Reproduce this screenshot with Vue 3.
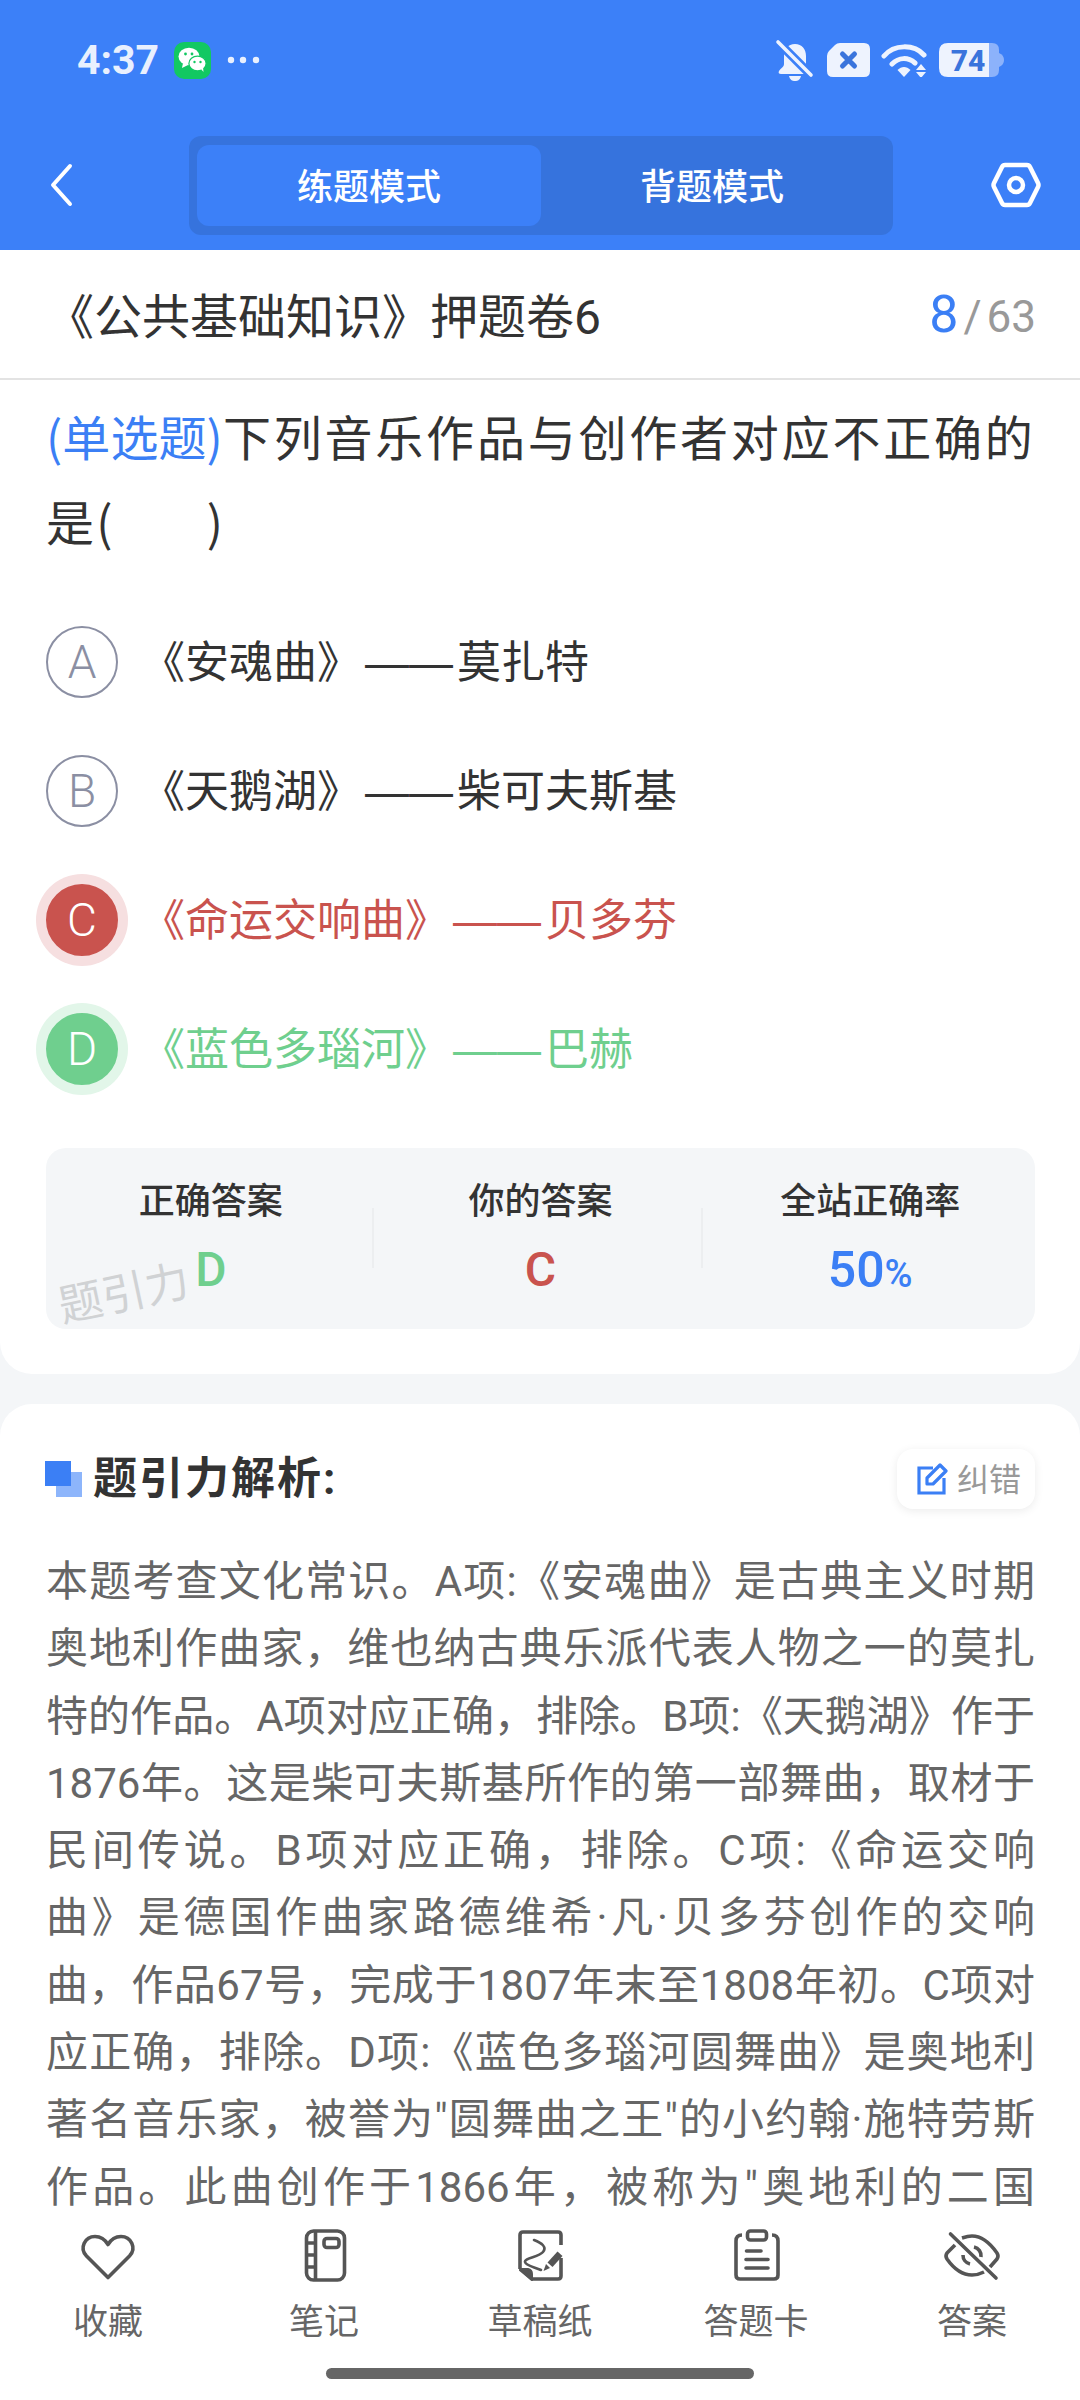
<template>
  <div class="screen">
    <header class="top">
      <div class="status">
        <div class="status-left">
          <span class="time">4:37</span>
          <svg class="wechat" width="37" height="37" viewBox="0 0 37 37">
            <rect width="37" height="37" rx="10" fill="#12c862" />
            <ellipse cx="15" cy="14.5" rx="10.5" ry="8.8" fill="#fff" />
            <path d="M9 21l-1 5 6-3z" fill="#fff" />
            <ellipse cx="23.5" cy="21.5" rx="8.6" ry="7.4" fill="#fff" stroke="#12c862" stroke-width="1.2" />
            <path d="M27 27l2.5 3-.5-5z" fill="#fff" />
            <circle cx="11.5" cy="12" r="1.4" fill="#12c862" />
            <circle cx="18" cy="12" r="1.4" fill="#12c862" />
            <circle cx="20.5" cy="20" r="1.2" fill="#12c862" />
            <circle cx="26.5" cy="20" r="1.2" fill="#12c862" />
          </svg>
          <svg width="36" height="8" viewBox="0 0 36 8">
            <circle cx="4" cy="4" r="3.2" fill="#e9f0fe" />
            <circle cx="16" cy="4" r="3.2" fill="#e9f0fe" />
            <circle cx="29" cy="4" r="3.2" fill="#e9f0fe" />
          </svg>
        </div>
        <div class="status-right">
          <svg width="42" height="42" viewBox="0 0 42 42">
            <path d="M21 5c-7 0-11 5-11 12v8c0 3-3 4-5 7-1 2 0 3 2 3h28c2 0 3-1 2-3-2-3-5-4-5-7v-8c0-7-4-12-11-12z" fill="#eef3fe" />
            <path d="M15 37h12c-1 4-3 5-6 5s-5-1-6-5z" fill="#eef3fe" />
            <path d="M3 2l36 36" stroke="#3c80f8" stroke-width="9" />
            <path d="M4 3l33 33" stroke="#eef3fe" stroke-width="3.6" stroke-linecap="round" />
          </svg>
          <svg width="43" height="34" viewBox="0 0 43 34">
            <path d="M13 0h24q6 0 6 6v22q0 6-6 6H6q-6 0-6-6V13q0-3 2-5l6-6q2-2 5-2z" fill="#eef3fe" />
            <path d="M15.5 11l12 12M27.500 11l-12 12" stroke="#3a74dc" stroke-width="5" stroke-linecap="round" />
          </svg>
          <svg width="47" height="34" viewBox="0 0 47 34">
            <path d="M3 13C13 1 33 1 43 12M11 21c7-7 16-7 23-1" fill="none" stroke="#eef3fe" stroke-width="5" stroke-linecap="round" />
            <path d="M16.500 27c4-4 9-4 13 0l-6.500 7z" fill="#eef3fe" />
            <path d="M40 21l5 6H35zM35 29h10l-5 6z" fill="#eef3fe" />
          </svg>
          <svg width="66" height="34" viewBox="0 0 66 34">
            <path d="M9 0h41v34H9q-9 0-9-9V9q0-9 9-9z" fill="#eef3fe" />
            <path d="M50 0h3q7 0 7 7v20q0 7-7 7h-3z" fill="#8cb2fb" />
            <path d="M60 10q5 2 5 7t-5 7z" fill="#8cb2fb" />
            <text x="29" y="28" text-anchor="middle" class="battery-text">74</text>
          </svg>
        </div>
      </div>
      <nav class="nav">
        <div class="nav-back">
          <svg width="24" height="44" viewBox="0 0 24 44">
            <path d="M21 3L4 22l17 19" fill="none" stroke="#fff" stroke-width="4" stroke-linecap="round" stroke-linejoin="round" />
          </svg>
        </div>
        <div class="mode-switch">
          <span class="mode active">练题模式</span>
          <span class="mode">背题模式</span>
        </div>
        <div class="nav-settings">
          <svg width="50" height="46" viewBox="0 0 50 46">
            <path d="M14 3h22q2 0 3 2l8 16q1 2 0 4l-8 16q-1 2-3 2H14q-2 0-3-2L3 25q-1-2 0-4l8-16q1-2 3-2z" fill="none" stroke="#fff" stroke-width="4.500" />
            <circle cx="25" cy="23" r="7" fill="none" stroke="#fff" stroke-width="4.500" />
          </svg>
        </div>
      </nav>
    </header>

    <main class="content">
      <section class="card question-card">
        <div class="title-row">
          <span class="paper-title">《公共基础知识》押题卷6</span>
          <span class="count"><b>8</b><i>/</i>63</span>
        </div>
        <p class="question">
          <span class="tag">(单选题)</span>下列音乐作品与创作者对应不正确的是(<span class="blank"></span>)
        </p>
        <ul class="options">
          <li v-for="opt in options" :key="opt.key" class="option" :class="opt.state">
            <span class="badge">{{ opt.key }}</span>
            <span class="option-text">{{ opt.work }}<span class="dash">——</span>{{ opt.author }}</span>
          </li>
        </ul>
        <div class="summary">
          <div v-for="s in summary" :key="s.label" class="stat">
            <span class="stat-label">{{ s.label }}</span>
            <span class="stat-value" :class="s.tone">{{ s.value }}<small v-if="s.unit">{{ s.unit }}</small></span>
          </div>
          <span class="watermark">题引力</span>
        </div>
      </section>

      <section class="card analysis-card">
        <div class="analysis-head">
          <div class="analysis-title">
            <span class="squares"><i></i><i></i></span>
            <h2>题引力解析:</h2>
          </div>
          <button class="fix-btn" type="button">
            <svg width="32" height="32" viewBox="0 0 32 32">
              <path d="M17 5H3v25h25V15" fill="none" stroke="#3b7ff5" stroke-width="3.200" />
              <path d="M11 21v-6L24 2l6 6-13 13z" fill="none" stroke="#3b7ff5" stroke-width="3.200" stroke-linejoin="round" />
            </svg>
            <span>纠错</span>
          </button>
        </div>
        <div class="analysis-body">
          <p v-for="(line, i) in lines" :key="i">{{ line }}</p>
        </div>
      </section>
    </main>

    <footer class="bottom">
      <div class="tools">
        <div class="tool">
          <svg width="60" height="60" viewBox="0 0 60 60">
            <path d="M30 51.500L8.500 30C1 22 7 10.500 17 10.500c6 0 10 3 13 8 3-5 7-8 13-8 10 0 16 11.500 8.500 19.500z" class="ico" />
          </svg>
          <span>收藏</span>
        </div>
        <div class="tool">
          <svg width="60" height="60" viewBox="0 0 60 60">
            <rect x="12.500" y="5" width="38" height="49" rx="7" class="ico" />
            <path d="M21.500 5v49M12.500 17h9M12.500 29h9M12.500 41h9" class="ico" />
            <rect x="30" y="12.500" width="15" height="9" rx="3" class="ico" />
          </svg>
          <span>笔记</span>
        </div>
        <div class="tool">
          <svg width="60" height="60" viewBox="0 0 60 60">
            <path d="M10 43V9q0-3 3-3h35q3 0 3 3v10M51 32v18q0 3-3 3H22L10 43" class="ico" />
            <path d="M10 43l12 11v-6q0-4-4-5z" fill="#555" stroke="#555" stroke-width="2" stroke-linejoin="round" />
            <path d="M24 14c8 3 13 7 9 12-4 5-19 6-18 10 1 4 10 5 16 8" class="ico thin" />
            <path d="M37.500 36.500l10-11 5 4.500-10 11z" fill="#555" />
            <path d="M36 38l-2.500 7 6.500-3z" fill="#555" />
          </svg>
          <span>草稿纸</span>
        </div>
        <div class="tool">
          <svg width="60" height="60" viewBox="0 0 60 60">
            <path d="M16 9q-6 0-6 6v34q0 4 4 4h34q4 0 4-4V15q0-6-6-6" class="ico" />
            <rect x="21.500" y="5" width="19" height="9" rx="3" class="ico" />
            <path d="M20.500 25H35M20 33.500h22M20 42h22" class="ico" stroke-linecap="round" />
          </svg>
          <span>答题卡</span>
        </div>
        <div class="tool">
          <svg width="60" height="60" viewBox="0 0 60 60">
            <path d="M13 19l-8 8q-2 3 0 6c7 10 15 16 25 16 4 0 8-1 12-3M20 12c3-1 7-2 10-2 10 0 18 7 25 17q2 3 0 6l-7 8" class="ico" />
            <path d="M8.500 8l45.500 44" class="ico" stroke-linecap="round" />
            <path d="M32 21a9 9 0 0 1 7 10M21 29a9 9 0 0 0 7 9" class="ico" />
          </svg>
          <span>答案</span>
        </div>
      </div>
      <div class="home-bar"></div>
    </footer>
  </div>
</template>

<script setup>
const options = [
  { key: 'A', work: '《安魂曲》', author: '莫扎特', state: '' },
  { key: 'B', work: '《天鹅湖》', author: '柴可夫斯基', state: '' },
  { key: 'C', work: '《命运交响曲》', author: '贝多芬', state: 'wrong' },
  { key: 'D', work: '《蓝色多瑙河》', author: '巴赫', state: 'right' }
]

const summary = [
  { label: '正确答案', value: 'D', tone: 'green' },
  { label: '你的答案', value: 'C', tone: 'red' },
  { label: '全站正确率', value: '50', unit: '%', tone: 'blue' }
]

// 每行单独两端对齐，和截图的换行保持一致
const lines = [
  '本题考查文化常识。A项:《安魂曲》是古典主义时期',
  '奥地利作曲家，维也纳古典乐派代表人物之一的莫扎',
  '特的作品。A项对应正确，排除。B项:《天鹅湖》作于',
  '1876年。这是柴可夫斯基所作的第一部舞曲，取材于',
  '民间传说。B项对应正确，排除。C项:《命运交响',
  '曲》是德国作曲家路德维希·凡·贝多芬创作的交响',
  '曲，作品67号，完成于1807年末至1808年初。C项对',
  '应正确，排除。D项:《蓝色多瑙河圆舞曲》是奥地利',
  '著名音乐家，被誉为"圆舞曲之王"的小约翰·施特劳斯',
  '作品。此曲创作于1866年，被称为"奥地利的二国'
]
</script>

<style>
body {
  margin: 0;
  background: #f4f6f8;
}
</style>

<style scoped>
.screen {
  width: 1080px;
  height: 2400px;
  display: flex;
  flex-direction: column;
  overflow: hidden;
  background: #f4f6f8;
  font-family: Roboto, "Noto Sans CJK SC", sans-serif;
}

.top {
  height: 250px;
  flex: none;
  background: #3c80f8;
  color: #fff;
}

.status {
  height: 120px;
  display: flex;
  align-items: center;
  justify-content: space-between;
  padding: 0 75px 0 77px;
  color: #e9f0fe;
}

.status-left,
.status-right {
  display: flex;
  align-items: center;
}

.status-left {
  gap: 16px;
}

.status-right {
  gap: 11px;
}

.time {
  width: 81px;
  font-size: 41px;
  font-weight: 700;
}

.battery-text {
  font-family: Roboto, sans-serif;
  font-size: 30px;
  font-weight: 800;
  fill: #3a74dc;
}

.nav {
  display: grid;
  grid-template-columns: 189px 704px 1fr;
  align-items: center;
  padding-top: 16px;
}

.nav-back {
  padding-left: 49px;
  display: flex;
  margin-top: -2px;
}

.nav-settings {
  display: flex;
  justify-content: flex-end;
  padding-right: 39px;
  margin-top: -2px;
}

.mode-switch {
  height: 99px;
  box-sizing: border-box;
  padding: 9px 8px;
  display: grid;
  grid-template-columns: 344px 1fr;
  background: #3673dd;
  border-radius: 12px;
}

.mode {
  display: flex;
  align-items: center;
  justify-content: center;
  padding-bottom: 4px;
  font-size: 36px;
  font-weight: 500;
  border-radius: 12px;
}

.mode + .mode {
  padding-right: 2px;
}

.mode.active {
  background: #3c80f8;
}

.content {
  flex: 1;
  min-height: 0;
  overflow: hidden;
  display: flex;
  flex-direction: column;
  gap: 30px;
}

.card {
  background: #fff;
  flex: none;
}

.question-card {
  height: 1124px;
  box-sizing: border-box;
  border-radius: 0 0 32px 32px;
}

.title-row {
  height: 130px;
  box-sizing: border-box;
  display: flex;
  align-items: center;
  justify-content: space-between;
  padding: 0 44px 0 46px;
  border-bottom: 2px solid #e3e3e3;
}

.paper-title {
  font-size: 48px;
  color: #333;
  padding-bottom: 3px;
}

.count {
  font-size: 44px;
  color: #999;
}

.count b {
  font-size: 52px;
  font-weight: 400;
  color: #3b7ff5;
}

.count i {
  font-style: normal;
  margin: 0 5px;
}

.question {
  margin: 13px 45px 0 46px;
  font-size: 48px;
  line-height: 85px;
  letter-spacing: 2.2px;
  color: #333;
  text-align: justify;
  font-family: "Noto Sans CJK SC", sans-serif;
}

.tag {
  color: #3b7ff5;
  letter-spacing: -0.5px;
}

.blank {
  display: inline-block;
  width: 92px;
}

.options {
  list-style: none;
  margin: 34px 0 0;
  padding: 0 0 0 46px;
}

.option {
  height: 129px;
  display: flex;
  align-items: center;
  gap: 23px;
  color: #333;
}

.badge {
  width: 72px;
  height: 72px;
  box-sizing: border-box;
  flex: none;
  display: flex;
  align-items: center;
  justify-content: center;
  border-radius: 50%;
  border: 2px solid #8b8fa3;
  color: #8b8fa3;
  font-size: 46px;
  font-weight: 300;
}

.option-text {
  padding-bottom: 5px;
  font-size: 44px;
  font-family: "Noto Sans CJK SC", sans-serif;
}

/* 思源黑体的破折号偏短，这里换成整宽的字形 */
.dash {
  margin: 0 4px;
  font-family: "Liberation Sans", sans-serif;
}

.option.wrong {
  color: #c9534e;
}

.option.wrong .badge {
  background: #c9534e;
  border-color: #c9534e;
  color: #fff;
  box-shadow: 0 0 0 10px #f6dfe0;
}

.option.right {
  color: #6fcf8e;
}

.option.right .badge {
  background: #6fcf8e;
  border-color: #6fcf8e;
  color: #fff;
  box-shadow: 0 0 0 10px #e2f6e9;
}

.summary {
  position: relative;
  margin: 35px 45px 0 46px;
  height: 181px;
  box-sizing: border-box;
  padding-top: 30px;
  display: grid;
  grid-template-columns: repeat(3, 1fr);
  background: #f4f6f8;
  border-radius: 20px;
}

.stat {
  position: relative;
  display: flex;
  flex-direction: column;
  align-items: center;
  gap: 14px;
}

.stat + .stat::before {
  content: "";
  position: absolute;
  left: -4px;
  top: 30px;
  width: 2px;
  height: 60px;
  background: #eceef0;
}

.stat-label {
  font-size: 36px;
  line-height: 48px;
  font-weight: 500;
  color: #333;
}

.stat-value {
  font-size: 48px;
  line-height: 60px;
  font-weight: 500;
}

.stat-value small {
  font-size: 38px;
}

.blue {
  color: #3b7ff5;
  font-size: 50px;
}

.green {
  color: #6fcf8e;
}

.red {
  color: #c9534e;
}

.watermark {
  position: absolute;
  left: 11px;
  top: 112px;
  font-size: 44px;
  line-height: 60px;
  color: #d0d2d4;
  transform: rotate(-12deg);
  font-family: "Noto Sans CJK SC", sans-serif;
}

.analysis-card {
  flex: 1;
  border-radius: 32px 32px 0 0;
  padding: 45px 45px 0 46px;
}

.analysis-head {
  display: flex;
  align-items: center;
  justify-content: space-between;
}

.analysis-title {
  display: flex;
  align-items: center;
  gap: 11px;
  margin-left: -1px;
}

.analysis-title h2 {
  margin: 0;
  font-size: 44px;
  line-height: 60px;
  font-weight: 700;
  letter-spacing: 2px;
  color: #333;
}

.squares {
  position: relative;
  width: 37px;
  height: 36px;
  display: block;
}

.squares i {
  position: absolute;
  width: 26px;
  height: 25px;
}

.squares i:first-child {
  right: 0;
  bottom: 0;
  background: #8db5fb;
}

.squares i:last-child {
  left: 0;
  top: 0;
  background: #3b7ff5;
}

.fix-btn {
  width: 138px;
  height: 60px;
  padding: 0 0 0 5px;
  display: flex;
  align-items: center;
  justify-content: center;
  gap: 9px;
  border: 0;
  background: #fff;
  border-radius: 16px;
  box-shadow: 0 2px 10px rgba(0, 0, 0, 0.08);
  font-family: inherit;
  font-size: 32px;
  color: #999;
}

.fix-btn span {
  padding-bottom: 4px;
}

.analysis-body {
  margin-top: 39px;
}

.analysis-body p {
  margin: 0;
  height: 67.3px;
  font-size: 42px;
  line-height: 67.3px;
  color: #666;
  text-align: justify;
  text-align-last: justify;
}

.bottom {
  height: 177px;
  flex: none;
  box-sizing: border-box;
  padding-top: 3px;
  background: #fff;
}

.tools {
  display: grid;
  grid-template-columns: repeat(5, 216px);
}

.tool {
  display: flex;
  flex-direction: column;
  align-items: center;
  gap: 13px;
  font-size: 35px;
  line-height: 48px;
  color: #666;
}

.ico {
  fill: none;
  stroke: #555;
  stroke-width: 3.6;
  stroke-linejoin: round;
}

.ico.thin {
  stroke-width: 2.6;
  stroke-linecap: round;
}

.home-bar {
  width: 428px;
  height: 11px;
  margin: 21px auto 0;
  background: #666;
  border-radius: 6px;
}
</style>
